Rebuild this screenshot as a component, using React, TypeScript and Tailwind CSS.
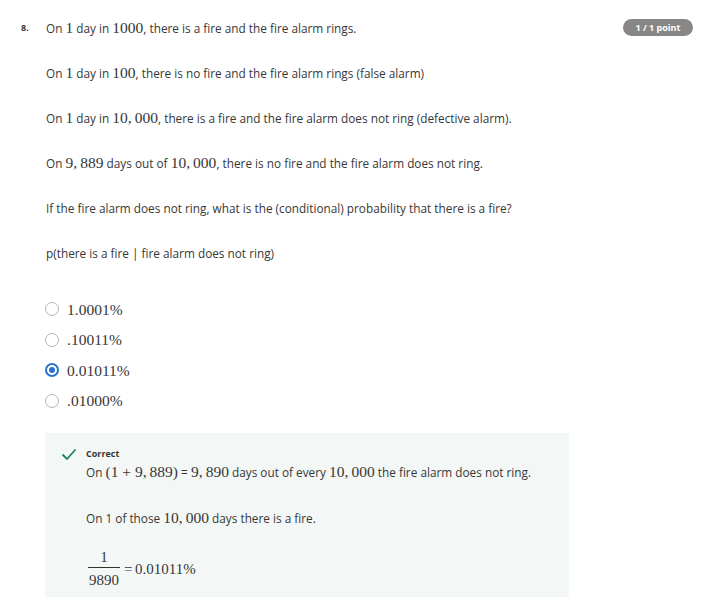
import React from 'react'

const M = ({ children }: { children: React.ReactNode }) => (
  <span className="font-['Liberation_Serif',serif] text-[15.5px] leading-none">{children}</span>
)

const options = ['1.0001%', '.10011%', '0.01011%', '.01000%']

const Radio = ({ checked }: { checked: boolean }) =>
  checked ? (
    <span className="w-[14px] h-[14px] rounded-full border-[2px] border-[#2a73cc] flex items-center justify-center">
      <span className="w-[6px] h-[6px] rounded-full bg-[#2a73cc]" />
    </span>
  ) : (
    <span className="w-[14px] h-[14px] rounded-full border border-[#b5b5b5]" />
  )

export default function App() {
  return (
    <div className="w-[701px] h-[616px] bg-white text-[#373737] font-['Open_Sans',sans-serif] text-[11.8px] relative">
      <div className="absolute right-[8px] top-[19px] h-[17px] w-[70px] rounded-full bg-[#878787] text-white text-[9px] font-bold flex items-center justify-center">
        1 / 1 point
      </div>
      <div className="flex pt-[18px] pl-[21px]">
        <div className="w-[25px] text-[9px] font-bold leading-[20px]">8.</div>
        <div className="flex flex-col">
          <div className="flex flex-col gap-[25px] leading-[20px]">
            <p>On <M>1</M> day in <M>1000</M>, there is a fire and the fire alarm rings.</p>
            <p>On <M>1</M> day in <M>100</M>, there is no fire and the fire alarm rings (false alarm)</p>
            <p>On <M>1</M> day in <M>10,&#8201;000</M>, there is a fire and the fire alarm does not ring (defective alarm).</p>
            <p>On <M>9,&#8201;889</M> days out of <M>10,&#8201;000</M>, there is no fire and the fire alarm does not ring.</p>
            <p>If the fire alarm does not ring, what is the (conditional) probability that there is a fire?</p>
            <p>p(there is a fire | fire alarm does not ring)</p>
          </div>
          <div className="flex flex-col mt-[31px] -ml-[1px]">
            {options.map((o, i) => (
              <div key={o} className="h-[30.6px] flex items-center gap-[8px]">
                <Radio checked={i === 2} />
                <M>{o}</M>
              </div>
            ))}
          </div>
          <div className="mt-[17px] -ml-[1px] w-[524px] h-[164px] bg-[#f3f8f6] pt-[14px] flex">
            <div className="w-[41px] pl-[16px] pt-[1px]">
              <svg width="16" height="13" viewBox="0 0 16 13">
                <path d="M1.5 6.5 L6 11 L14.5 1.5" fill="none" stroke="#1f8354" strokeWidth="1.8" />
              </svg>
            </div>
            <div className="flex flex-col">
              <div className="text-[9px] font-bold leading-[14px]">Correct</div>
              <p className="leading-[20px] mt-[1px]">
                On <M>(1 + 9,&#8201;889)</M> = <M>9,&#8201;890</M> days out of every <M>10,&#8201;000</M> the fire alarm does not ring.
              </p>
              <p className="leading-[20px] mt-[26px]">On 1 of those <M>10,&#8201;000</M> days there is a fire.</p>
              <div className="mt-[21px] ml-[2px] flex items-start font-['Liberation_Serif',serif] text-[15px]">
                <div className="flex flex-col items-center">
                  <span className="leading-[16px] h-[18px]">1</span>
                  <span className="border-t border-[#333] px-[1px] pt-[4px] leading-[16px]">9890</span>
                </div>
                <span className="ml-[4px] mt-[12px] leading-[16px]">=&#8202;&#8202;0.01011%</span>
              </div>
            </div>
          </div>
        </div>
      </div>
    </div>
  )
}
